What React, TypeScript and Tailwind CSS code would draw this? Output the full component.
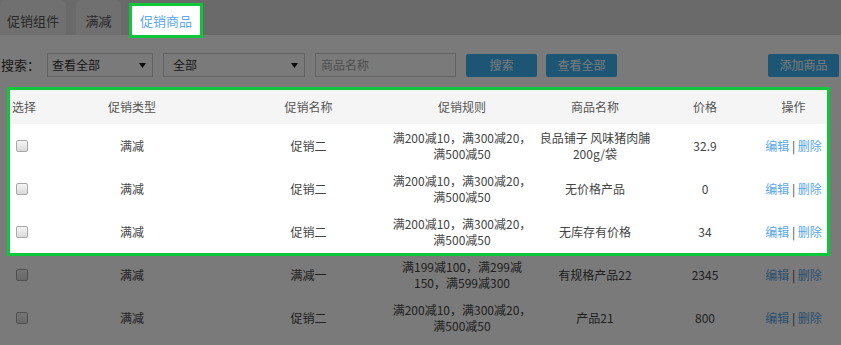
import React from 'react';

type Row = {
    type: string;
    name: string;
    rule: string[];
    product: string[];
    price: string;
};

const RULE_A = ['满200减10，满300减20，', '满500减50'];

const highlightedRows: Row[] = [
    { type: '满减', name: '促销二', rule: RULE_A, product: ['良品铺子 风味猪肉脯', '200g/袋'], price: '32.9' },
    { type: '满减', name: '促销二', rule: RULE_A, product: ['无价格产品'], price: '0' },
    { type: '满减', name: '促销二', rule: RULE_A, product: ['无库存有价格'], price: '34' },
];

const otherRows: Row[] = [
    { type: '满减', name: '满减一', rule: ['满199减100，满299减', '150，满599减300'], product: ['有规格产品22'], price: '2345' },
    { type: '满减', name: '促销二', rule: RULE_A, product: ['产品21'], price: '800' },
];

const COLS = 'grid grid-cols-[21px_202px_151px_156px_110px_110px_67px]';
const CELL = 'flex flex-col items-center justify-center text-center whitespace-nowrap';

const Caret = () => (
    <svg width="7" height="5" viewBox="0 0 7 5" className="shrink-0">
        <path d="M0 0 L7 0 L3.5 5 Z" fill="#111" />
    </svg>
);

const Checkbox = () => (
    <span className="block w-[12px] h-[12px] rounded-[2px] border border-[#a8a8a8] bg-linear-to-b from-[#f5f5f5] to-[#d9d9d9]" />
);

const TableRow: React.FC<{ row: Row }> = ({ row }) => (
    <div className={`${COLS} h-[43px] bg-white text-[12px] leading-[16px] text-[#444]`}>
        <div className="flex items-center pl-[6px]"><Checkbox /></div>
        <div className={CELL}>{row.type}</div>
        <div className={CELL}>{row.name}</div>
        <div className={CELL}>
            {row.rule.map((line, i) => <span key={i}>{line}</span>)}
        </div>
        <div className={CELL}>
            {row.product.map((line, i) => <span key={i}>{line}</span>)}
        </div>
        <div className={CELL}>{row.price}</div>
        <div className={CELL}>
            <span>
                <a className="text-[#5aa7ea] cursor-pointer">编辑</a>
                <span className="text-[#444]"> | </span>
                <a className="text-[#5aa7ea] cursor-pointer">删除</a>
            </span>
        </div>
    </div>
);

export default function App() {
    return (
        <div className="relative w-[841px] h-[345px] overflow-hidden bg-white font-['Noto_Sans_CJK_SC',sans-serif] text-[#333]">
            {/* tabs */}
            <div className="flex h-[35px] bg-[#dedede] text-[13px]">
                <div className="w-[66px] h-[35px] pt-[6px] flex items-center justify-center rounded-t-[6px] bg-[#ebebeb] text-[#555]">促销组件</div>
                <div className="ml-[10px] w-[45px] h-[35px] pt-[6px] flex items-center justify-center rounded-t-[6px] bg-[#ebebeb] text-[#555]">满减</div>
                <div className="relative z-20 ml-[11px] mt-[6px] w-[68px] h-[29px] flex items-center justify-center bg-white text-[#5ea9ef] outline-3 outline-[#0dc63a]">促销商品</div>
            </div>

            {/* search bar */}
            <div className="flex items-center mt-[18px] h-[24px] pl-[1px] text-[12px]">
                <span className="text-[13px] text-[#333] w-[46px]">搜索：</span>
                <div className="w-[106px] h-[24px] flex items-center justify-between pl-[4px] pr-[6px] border border-[#cfcfcf] bg-white">
                    <span>查看全部</span>
                    <Caret />
                </div>
                <div className="ml-[10px] w-[142px] h-[24px] flex items-center justify-between pl-[9px] pr-[6px] border border-[#cfcfcf] bg-white">
                    <span>全部</span>
                    <Caret />
                </div>
                <div className="ml-[10px] w-[141px] h-[24px] flex items-center pl-[5px] border border-[#cfcfcf] bg-white text-[#a5a5a5]">商品名称</div>
                <button className="ml-[10px] w-[71px] h-[23px] rounded-[2px] bg-[#3bb4f2] text-white">搜索</button>
                <button className="ml-[9px] w-[71px] h-[23px] rounded-[2px] bg-[#3bb4f2] text-white">查看全部</button>
                <button className="ml-auto mr-[2px] w-[71px] h-[23px] rounded-[2px] bg-[#3bb4f2] text-white">添加商品</button>
            </div>

            {/* table */}
            <div className="mt-[13px] ml-[10px] w-[817px]">
                <div className="relative z-20 outline-3 outline-[#0dc63a]">
                    <div className={`${COLS} h-[34px] bg-[#f5f5f5] text-[12px] text-[#555]`}>
                        <div className="flex items-center pl-[2px] whitespace-nowrap">选择</div>
                        <div className={CELL}>促销类型</div>
                        <div className={CELL}>促销名称</div>
                        <div className={CELL}>促销规则</div>
                        <div className={CELL}>商品名称</div>
                        <div className={CELL}>价格</div>
                        <div className={CELL}>操作</div>
                    </div>
                    {highlightedRows.map((row, i) => <TableRow key={i} row={row} />)}
                </div>
                {otherRows.map((row, i) => <TableRow key={i} row={row} />)}
            </div>

            {/* guide overlay */}
            <div className="fixed inset-0 z-10 bg-black/[0.52]" />
        </div>
    );
}
